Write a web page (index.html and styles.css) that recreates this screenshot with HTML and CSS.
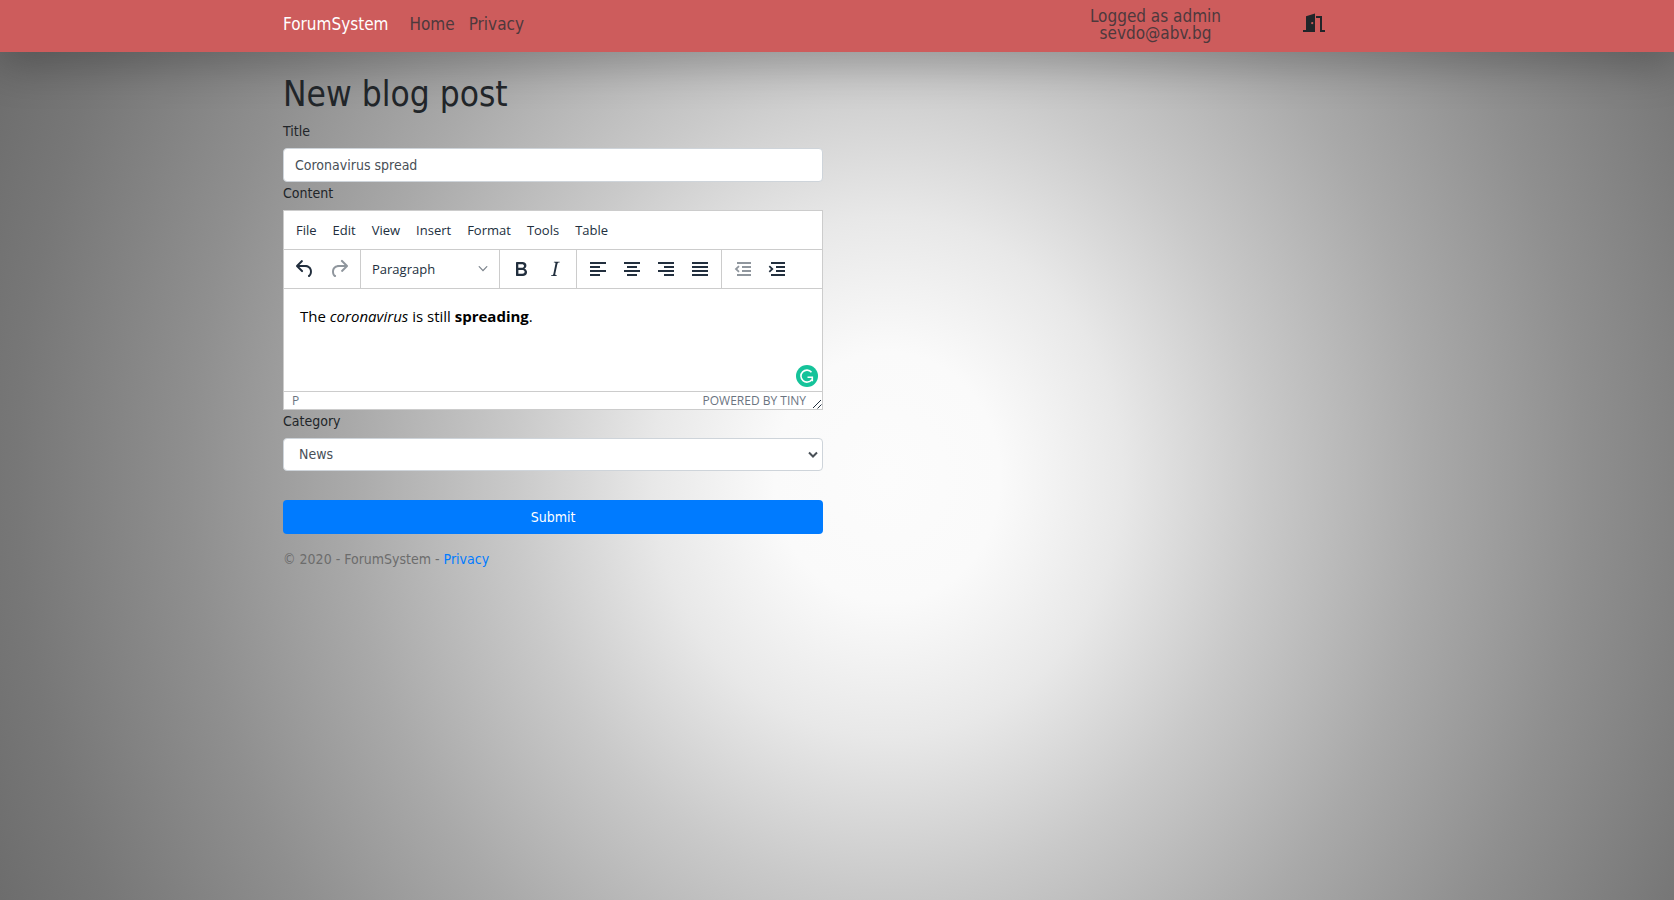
FILE: index.html
```html
<!DOCTYPE html>
<html lang="en">
<head>
<meta charset="utf-8">
<title>New blog post - ForumSystem</title>
<link rel="stylesheet" href="styles.css">
</head>
<body>
<header class="navbar">
  <div class="container navbar-inner">
    <a class="brand" href="#">ForumSystem</a>
    <nav class="nav">
      <a href="#">Home</a>
      <a href="#">Privacy</a>
    </nav>
    <a class="account" href="#">Logged as admin<br>sevdo@abv.bg</a>
    <button class="logout" type="button" aria-label="Log out">
      <svg width="24" height="20" viewBox="0 0 24 20" aria-hidden="true">
        <path fill="#212529" fill-rule="evenodd" d="M4 3.2 13 .6V19H1v-2h3zM10.2 9a1.1 1.1 0 1 0 .1 2.200 1.100 1.100 0 0 0-.1-2.200z"/>
        <path fill="none" stroke="#212529" stroke-width="2" d="M14 4h5v14h4"/>
      </svg>
    </button>
  </div>
</header>
<div class="container">
  <main>
    <h1>New blog post</h1>
    <form class="post-form">
      <label for="title">Title</label>
      <input class="control" id="title" type="text" value="Coronavirus spread">
      <label for="content">Content</label>
      <div class="editor">
        <div class="menubar">
          <button type="button">File</button>
          <button type="button">Edit</button>
          <button type="button">View</button>
          <button type="button">Insert</button>
          <button type="button">Format</button>
          <button type="button">Tools</button>
          <button type="button">Table</button>
        </div>
        <div class="toolbar">
          <div class="group">
            <button type="button" aria-label="Undo"><svg width="24" height="24" viewBox="0 0 24 24"><path d="M6.400 8H12c3.700 0 6.200 2 6.800 5.100.6 2.700-.4 5.600-2.300 6.800a1 1 0 0 1-1-1.800c1.100-.6 1.800-2.700 1.400-4.600-.5-2.100-2.100-3.500-4.900-3.500H6.400l3.300 3.300a1 1 0 1 1-1.400 1.400l-5-5a1 1 0 0 1 0-1.400l5-5a1 1 0 0 1 1.400 1.400L6.400 8z"/></svg></button>
            <button type="button" aria-label="Redo" disabled><svg width="24" height="24" viewBox="0 0 24 24"><path d="M17.600 10H12c-2.800 0-4.400 1.400-4.900 3.500-.4 2 .3 4 1.400 4.600a1 1 0 1 1-1 1.800c-2-1.200-2.900-4.100-2.300-6.800.6-3 3-5.100 6.800-5.100h5.600l-3.300-3.300a1 1 0 1 1 1.400-1.400l5 5a1 1 0 0 1 0 1.400l-5 5a1 1 0 0 1-1.400-1.400l3.300-3.300z"/></svg></button>
          </div>
          <div class="group">
            <button class="format" type="button">Paragraph
              <svg width="10" height="10" viewBox="0 0 10 10"><path d="M.8 2.200a.6.6 0 0 1 .8 0L5 5.700l3.400-3.500a.6.6 0 0 1 .8.900L5 7.500.8 3.100a.6.6 0 0 1 0-.9z"/></svg>
            </button>
          </div>
          <div class="group">
            <button type="button" aria-label="Bold"><svg width="24" height="24" viewBox="0 0 24 24"><path fill-rule="evenodd" d="M7.800 19c-.3 0-.5 0-.6-.2l-.2-.5V5.700c0-.2 0-.4.2-.5l.6-.2h5c1.500 0 2.700.3 3.500 1 .7.600 1.100 1.400 1.100 2.500a3 3 0 0 1-.6 1.900c-.4.6-1 1-1.600 1.200.4.100.9.300 1.300.6s.8.700 1 1.200c.4.400.5 1 .5 1.600 0 1.300-.4 2.300-1.300 3-.8.700-2.100 1-3.800 1H7.800zm5-8.300c.6 0 1.200-.1 1.600-.5.400-.3.600-.7.600-1.300 0-1.100-.8-1.700-2.300-1.700H9.300v3.500h3.400zm.5 6c.7 0 1.300-.1 1.700-.4.400-.4.600-.9.600-1.500s-.2-1-.7-1.400c-.4-.3-1-.4-2-.4H9.400v3.800h4z"/></svg></button>
            <button type="button" aria-label="Italic"><svg width="24" height="24" viewBox="0 0 24 24"><path d="M16.700 4.700l-.1.900h-.3c-.6 0-1 0-1.400.3-.3.300-.4.600-.5 1.100l-2.100 9.800v.6c0 .5.400.8 1.400.8h.2l-.2.800H8l.2-.8h.2c1.100 0 1.800-.5 2-1.500l2-9.800.1-.5c0-.6-.4-.8-1.400-.8h-.3l.2-.9h5.800z"/></svg></button>
          </div>
          <div class="group">
            <button type="button" aria-label="Align left"><svg width="24" height="24" viewBox="0 0 24 24"><path d="M4 5h16v2H4zM4 9h10v2H4zM4 13h16v2H4zM4 17h10v2H4z"/></svg></button>
            <button type="button" aria-label="Align center"><svg width="24" height="24" viewBox="0 0 24 24"><path d="M4 5h16v2H4zM7 9h10v2H7zM4 13h16v2H4zM7 17h10v2H7z"/></svg></button>
            <button type="button" aria-label="Align right"><svg width="24" height="24" viewBox="0 0 24 24"><path d="M4 5h16v2H4zM10 9h10v2H10zM4 13h16v2H4zM10 17h10v2H10z"/></svg></button>
            <button type="button" aria-label="Justify"><svg width="24" height="24" viewBox="0 0 24 24"><path d="M4 5h16v2H4zM4 9h16v2H4zM4 13h16v2H4zM4 17h16v2H4z"/></svg></button>
          </div>
          <div class="group">
            <button type="button" aria-label="Decrease indent" disabled><svg width="24" height="24" viewBox="0 0 24 24"><path d="M6 5h14v2H6zM11 9h9v2h-9zM11 13h9v2h-9zM6 17h14v2H6zM8.600 9.800 6.300 12l2.300 2.200-1.200 1.400L3.700 12l3.700-3.600z"/></svg></button>
            <button type="button" aria-label="Increase indent"><svg width="24" height="24" viewBox="0 0 24 24"><path d="M6 5h14v2H6zM11 9h9v2h-9zM11 13h9v2h-9zM6 17h14v2H6zM3.700 9.800 6 12l-2.300 2.200 1.200 1.400L8.600 12 4.900 8.400z"/></svg></button>
          </div>
        </div>
        <div class="edit-area" id="content" contenteditable="true" spellcheck="false" role="textbox" aria-label="Content">
          <p>The <em>coronavirus</em> is still <strong>spreading</strong>.</p>
        </div>
        <svg class="grammar" width="22" height="22" viewBox="0 0 22 22" aria-hidden="true">
          <circle cx="11" cy="11" r="11" fill="#15c39a"/>
          <path d="M15.500 7.200A6 6 0 1 0 15.800 14.600M11.500 12.300h4.800v4" fill="none" stroke="#fff" stroke-width="1.600"/>
        </svg>
        <div class="statusbar">
          <span>P</span>
          <a href="#">POWERED BY TINY</a>
          <svg width="10" height="10" viewBox="0 0 10 10" aria-hidden="true"><path d="M1 9 9 1M5.500 9.500 9.500 5.500" fill="none" stroke="#222f3e" stroke-width="1"/></svg>
        </div>
      </div>
      <label for="category">Category</label>
      <div class="select-wrap">
        <select class="control" id="category"><option>News</option></select>
        <svg class="caret" width="10" height="8" viewBox="0 0 10 8" aria-hidden="true"><path d="M1 1.500 5 5.500 9 1.500" fill="none" stroke="#495057" stroke-width="2"/></svg>
      </div>
      <button class="submit" type="submit">Submit</button>
    </form>
  </main>
  <footer>© 2020 - ForumSystem - <a href="#">Privacy</a></footer>
</div>
</body>
</html>
```
FILE: styles.css
```css
* { box-sizing: border-box; }

html { min-height: 100%; }

body {
  margin: 0;
  min-height: 100vh;
  font: 14px/21px "DejaVu Sans Condensed", "Noto Sans", sans-serif;
  color: #212529;
  background: radial-gradient(ellipse 52% 107% at 53% 53%, #fcfcfc 0%, #fafafa 13%, #e8e8e8 27%, #c9c9c9 43%, #a9a9a9 62%, #8f8f8f 80%, #777 100%, #6c6c6c 112%) no-repeat;
}

button, input, select { font: inherit; color: inherit; }
button { margin: 0; padding: 0; border: 0; background: none; }
a { color: #007bff; text-decoration: none; }
svg { display: block; }

.container {
  width: 100%;
  max-width: 1140px;
  margin: 0 auto;
  padding: 0 16px;
}

.navbar {
  background: #cd5c5c;
  box-shadow: 0 14px 42px rgba(0, 0, 0, .25);
}
.navbar-inner {
  display: flex;
  align-items: center;
  height: 52px;
  padding-right: 81px;
  font-size: 17px;
  line-height: 17px;
}
.brand { color: #fff; margin-right: 21px; padding-bottom: 4px; }
.nav { display: flex; flex: 1; gap: 14px; padding-bottom: 4px; }
.nav a, .account { color: #4d393c; }
.account { margin-right: 81px; padding-bottom: 3px; text-align: center; }
.logout { padding-bottom: 6px; }

h1 {
  margin: 21px 0 6px;
  font-size: 35px;
  line-height: 42px;
  font-weight: 400;
}

.post-form {
  display: flex;
  flex-direction: column;
  width: 100%;
  max-width: 540px;
}
label { margin-bottom: 6px; }
.control {
  width: 100%;
  height: 34px;
  padding: 0 11px;
  border: 1px solid #ced4da;
  border-radius: 4px;
  background: #fff;
  color: #495057;
}
.control + label { margin-top: 1px; }

.editor {
  position: relative;
  display: flex;
  flex-direction: column;
  min-height: 200px;
  margin-bottom: 1px;
  border: 1px solid #ccc;
  background: #fff;
  color: #222f3e;
  font: 13px/18px "Open Sans", sans-serif;
}
.menubar {
  display: flex;
  gap: 16px;
  height: 39px;
  padding: 0 12px;
  align-items: center;
  border-bottom: 1px solid #ccc;
}
.toolbar { display: flex; height: 39px; border-bottom: 1px solid #ccc; }
.group {
  display: flex;
  align-items: center;
  gap: 10px;
  padding: 0 9px;
  border-right: 1px solid #ccc;
}
.group:last-child { border-right: 0; }
.group svg { fill: #222f3e; }
.group button:disabled { opacity: .5; }
.format {
  display: flex;
  align-items: center;
  justify-content: space-between;
  width: 120px;
  padding: 0 2px;
}
.format svg { opacity: .6; }
.edit-area {
  flex: 1;
  padding: 16px;
  color: #000;
  font-size: 15px;
  line-height: 22px;
  outline: 0;
}
.edit-area p { margin: 0; }
.grammar { position: absolute; right: 4px; bottom: 22px; }
.statusbar {
  display: flex;
  align-items: center;
  height: 18px;
  padding-left: 8px;
  border-top: 1px solid #ccc;
  color: #6b747f;
  font-size: 12px;
}
.statusbar a { margin-left: auto; margin-right: 6px; color: inherit; }
.statusbar svg { align-self: flex-end; }

.select-wrap { position: relative; }
.select-wrap .control { display: block; height: 33px; padding-left: 15px; appearance: none; }
.caret { position: absolute; right: 5px; top: 13px; pointer-events: none; }
.submit {
  height: 34px;
  margin-top: 29px;
  border-radius: 4px;
  background: #007bff;
  color: #fff;
}
footer { margin-top: 15px; color: #6c6c6c; }
```
